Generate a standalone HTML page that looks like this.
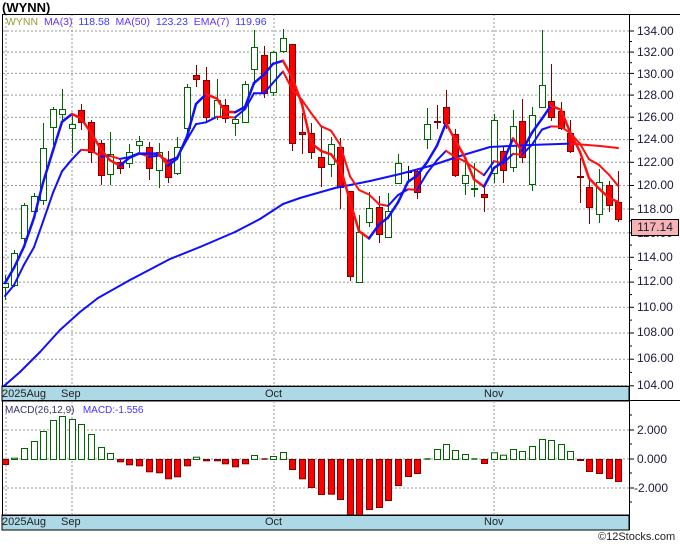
<!DOCTYPE html>
<html><head><meta charset="utf-8">
<style>
body{margin:0;background:#fff;width:680px;height:546px;overflow:hidden;position:relative;font-family:"Liberation Sans","DejaVu Sans",sans-serif}
.t{position:absolute;white-space:nowrap}
.ax{position:absolute;left:637px;font-size:12px;color:#1a1a3a;line-height:12px}
</style></head><body>
<svg id="s" width="680" height="546" style="position:absolute;left:0;top:0"></svg>
<div class="t" style="left:2px;top:0px;font-size:13px;font-weight:bold;color:#000">(WYNN)</div>
<div class="t" style="left:6px;top:16px;font-size:10.5px;color:#3a3aff"><span style="color:#999933">WYNN</span>&nbsp; <span style="color:#6633ff">MA(3)</span>&nbsp; 118.58&nbsp; <span style="color:#6633ff">MA(50)</span>&nbsp; 123.23&nbsp; <span style="color:#6633ff">EMA(7)</span>&nbsp; 119.96</div>
<div class="t" style="left:5px;top:405px;font-size:10px;color:#333366">MACD(26,12,9)&nbsp;&nbsp; <span style="color:#4433ff">MACD:-1.556</span></div>
<div class="t" style="left:2px;top:388px;font-size:11px;color:#222">2025Aug</div>
<div class="t" style="left:61px;top:388px;font-size:11px;color:#222">Sep</div>
<div class="t" style="left:265px;top:388px;font-size:11px;color:#222">Oct</div>
<div class="t" style="left:484px;top:388px;font-size:11px;color:#222">Nov</div>
<div class="t" style="left:2px;top:516px;font-size:11px;color:#222">2025Aug</div>
<div class="t" style="left:61px;top:516px;font-size:11px;color:#222">Sep</div>
<div class="t" style="left:265px;top:516px;font-size:11px;color:#222">Oct</div>
<div class="t" style="left:484px;top:516px;font-size:11px;color:#222">Nov</div>
<div class="ax" style="top:25px">134.00</div>
<div class="ax" style="top:46px">132.00</div>
<div class="ax" style="top:68px">130.00</div>
<div class="ax" style="top:89px">128.00</div>
<div class="ax" style="top:111px">126.00</div>
<div class="ax" style="top:133px">124.00</div>
<div class="ax" style="top:156px">122.00</div>
<div class="ax" style="top:179px">120.00</div>
<div class="ax" style="top:203px">118.00</div>
<div class="ax" style="top:227px">116.00</div>
<div class="ax" style="top:251px">114.00</div>
<div class="ax" style="top:275px">112.00</div>
<div class="ax" style="top:301px">110.00</div>
<div class="ax" style="top:326px">108.00</div>
<div class="ax" style="top:352px">106.00</div>
<div class="ax" style="top:379px">104.00</div>
<div class="t" style="left:631px;top:219px;width:46px;height:15px;background:#f7b3b3;border:1px solid #000;font-size:12px;line-height:15px;text-align:center;color:#1a1a3a">117.14</div>
<div class="ax" style="top:424px">2.000</div>
<div class="ax" style="top:453px">0.000</div>
<div class="ax" style="top:482px;left:634px">-2.000</div>
<div class="t" style="left:598px;top:531px;font-size:11px;color:#222">©12Stocks.com</div>
<script>
var S=document.getElementById('s'),h='';
function y(p){return 31+1400*Math.log(134/p)}
function p(yy){return 134*Math.exp(-(yy-31)/1400)}
h+='<rect x="630" y="14" width="50" height="520" fill="#fff"/>';
h+='<rect x="2" y="386" width="627" height="15" fill="#add8e6" stroke="#000"/>';
h+='<rect x="2" y="515" width="627" height="15" fill="#add8e6" stroke="#000"/>';
for(var v=104;v<=134;v+=2){var yy=y(v).toFixed(1);h+='<line x1="3" x2="629" y1="'+yy+'" y2="'+yy+'" stroke="#999" stroke-dasharray="2,2"/>';h+='<line x1="629" x2="634" y1="'+yy+'" y2="'+yy+'" stroke="#000"/>';var ym=y(v+1).toFixed(1);if(v<134)h+='<line x1="629" x2="632" y1="'+ym+'" y2="'+ym+'" stroke="#000"/>';}
[430,459,488].forEach(function(a){h+='<line x1="3" x2="629" y1="'+a+'" y2="'+a+'" stroke="#999" stroke-dasharray="2,2"/><line x1="629" x2="634" y1="'+a+'" y2="'+a+'" stroke="#000"/>'});
[415,444,473,502].forEach(function(a){h+='<line x1="629" x2="632" y1="'+a+'" y2="'+a+'" stroke="#000"/>'});
[6,72,274,494].forEach(function(a){h+='<line x1="'+a+'" x2="'+a+'" y1="14" y2="386" stroke="#999" stroke-dasharray="2,2"/><line x1="'+a+'" x2="'+a+'" y1="401" y2="515" stroke="#999" stroke-dasharray="2,2"/>'});
var C=[[5,283,287,275,300,1],[14,253,285,250,287,1],[24,205,238,203,245,1],[34,196,211,193,213,1],[43,148,200,123,205,1],[53,109,127,107,145,1],[62,109,114,89,120,1],[72,124,128,115,153,1],[81,110,122,104,130,0],[91,122,152,120,163,0],[101,143,175,140,185,0],[110,154,174,132,185,1],[120,162,168,160,174,0],[129,152,163,144,168,1],[139,141,145,136,152,1],[149,147,168,142,180,0],[159,152,170,143,188,1],[168,160,177,151,183,0],[177,147,173,137,175,1],[187,87,128,84,135,1],[196,75,79,65,87,0],[206,80,117,67,122,0],[217,100,117,79,120,1],[225,105,118,99,123,0],[235,119,123,117,136,1],[245,84,122,81,122,1],[254,47,69,30,85,1],[264,55,93,46,98,0],[273,52,92,51,96,1],[283,38,51,29,53,1],[292,44,143,44,151,0],[302,132,134,113,154,0],[311,133,152,123,159,0],[321,157,167,127,187,0],[331,144,164,137,177,1],[340,147,187,138,209,0],[350,191,276,191,281,0],[359,232,282,215,282,1],[369,208,222,192,227,1],[379,207,234,196,243,0],[388,211,237,193,238,1],[398,163,183,154,184,1],[408,172,172,166,180,2],[417,171,192,169,199,0],[427,124,139,108,149,1],[437,121,122,105,129,0],[446,107,123,90,129,0],[455,134,175,129,177,0],[465,175,183,163,195,1],[474,188,188,163,197,1],[484,194,197,188,212,0],[494,120,173,114,183,1],[503,151,170,147,183,0],[513,126,167,110,172,1],[522,121,157,99,163,0],[532,115,184,107,191,1],[542,85,107,30,107,1],[551,101,117,64,121,0],[561,111,128,102,130,0],[570,133,151,120,153,0],[580,176,177,158,203,0],[589,187,207,177,224,0],[599,182,214,169,223,1],[609,185,205,181,212,0],[618,202,219,171,222,0]];
C.forEach(function(c){var col=c[5]==1?'#006400':c[5]==2?'#000':'#800000';
h+='<line x1="'+(c[0]+.5)+'" x2="'+(c[0]+.5)+'" y1="'+c[3]+'" y2="'+c[4]+'" stroke="'+col+'"/>';
var hh=Math.max(c[2]-c[1],1);
if(c[5]==2)h+='<line x1="'+(c[0]-3)+'" x2="'+(c[0]+4)+'" y1="'+c[1]+'.5" y2="'+c[1]+'.5" stroke="#000"/>';
else h+='<rect x="'+(c[0]-2.5)+'" y="'+(c[1]+.5)+'" width="6" height="'+hh+'" fill="'+(c[5]?'#fff':'#f00')+'" stroke="'+col+'"/>';});
var cl=C.map(function(c){return p(c[5]==1?c[1]:c[5]==0?c[2]:c[1])});
function seg(pts,w){var s='';for(var i=1;i<pts.length;i++){var col=pts[i][1]<=pts[i-1][1]?'#1010ff':'#ff1010';s+='<line x1="'+pts[i-1][0]+'" y1="'+pts[i-1][1].toFixed(1)+'" x2="'+pts[i][0]+'" y2="'+pts[i][1].toFixed(1)+'" stroke="'+col+'" stroke-width="'+w+'" stroke-linecap="round"/>';}return s;}
var M=[[4,386],[20,372],[40,352],[60,330],[80,312],[98,298],[130,280],[170,259],[200,247],[235,232],[260,219],[283,204],[300,198],[335,188],[370,181],[400,174],[430,166],[460,156],[490,147],[530,145],[570,143.6],[600,146],[618,148]];
h+=seg(M,2);
var e=p(300),E=[];cl.forEach(function(c,i){e=i==0?p(296):e+(c-e)*0.25;E.push([C[i][0],y(e)])});
h+=seg(E,2);
var A=[];cl.forEach(function(c,i){var a=i==0?c:i==1?(cl[0]+c)/2:(cl[i-2]+cl[i-1]+c)/3;A.push([C[i][0],y(a)])});
h+=seg(A,2.5);
var H=[-5,1.3,11,18,28,39,43,40,35,25,12,6,-2.3,-5.3,-6.3,-12.3,-13.3,-19.3,-17.3,-6.3,2.3,-1.3,-1.3,-4.3,-7.3,-4.3,4,-0.3,3,7,-10,-19.3,-28,-35,-34.7,-40,-55,-56,-50,-48,-41,-26,-17,-14,0.3,10,15,9,5,0.3,-4,6.7,4.3,10,8,13,20,19,15,8,-1,-12,-14,-19,-22];
H.forEach(function(v,i){var x=C[i][0]-2.5;if(Math.abs(v)<0.6){h+='<line x1="'+x+'" x2="'+(x+6)+'" y1="459" y2="459" stroke="'+(v>0?'#006400':'#800000')+'" stroke-width="1.5"/>';return;}
if(v>0)h+='<rect x="'+x+'" y="'+(459.5-v)+'" width="6" height="'+v+'" fill="#fff" stroke="#006400"/>';
else{var hh=Math.min(-v,55.5);h+='<rect x="'+x+'" y="459.5" width="6" height="'+hh+'" fill="#f00" stroke="#800000"/>';}});
h+='<rect x="2.5" y="14.5" width="627" height="372" fill="none" stroke="#000"/>';
h+='<rect x="2.5" y="400.5" width="627" height="115" fill="none" stroke="#000"/>';
h+='<line x1="629.5" x2="629.5" y1="14" y2="530" stroke="#000"/><line x1="2" x2="680" y1="14.5" y2="14.5" stroke="#000"/><line x1="2" x2="680" y1="400.5" y2="400.5" stroke="#000"/>';
S.innerHTML=h;
</script>
</body></html>
